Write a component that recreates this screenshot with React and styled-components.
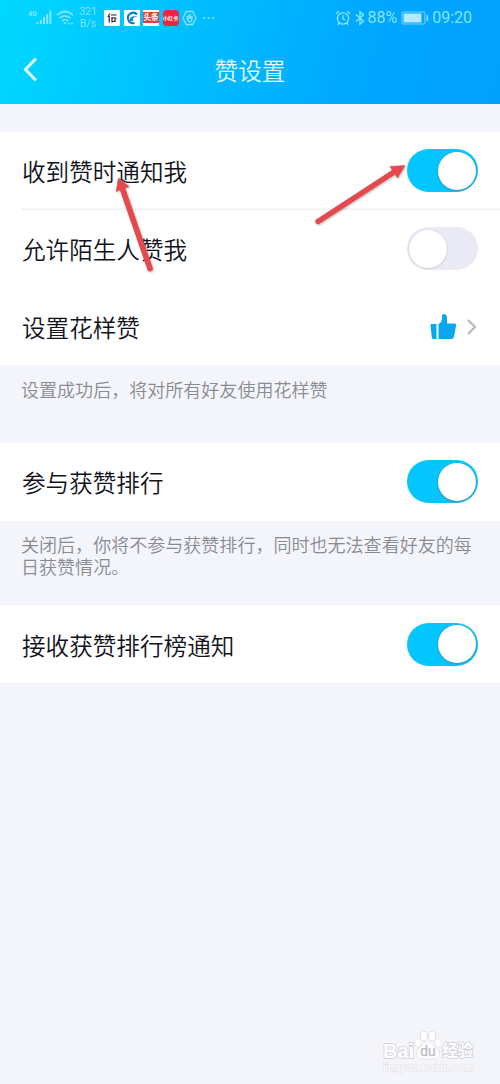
import React from 'react';
import styled, { createGlobalStyle } from 'styled-components';

const GlobalStyle = createGlobalStyle`
  body {
    margin: 0;
    background-color: #f4f5fa;
    font-family: Roboto, 'Noto Sans CJK SC', sans-serif;
  }
`;

const Page = styled.div`
  position: relative;
  min-height: 1084px;
  overflow: hidden;
`;

const Header = styled.header`
  height: 104px;
  background: linear-gradient(105deg, #00d8ff 0%, #00c2ff 32%, #00a8ff 70%, #00a0ff 100%);
`;

const StatusBar = styled.div`
  display: flex;
  align-items: center;
  justify-content: space-between;
  height: 36px;
  padding: 0 28px;
  color: #84e4ff;
`;

const StatusGroup = styled.div`
  display: flex;
  align-items: center;
`;

const Speed = styled.div`
  width: 20px;
  margin: 0 6px 0 4px;
  font-size: 10.5px;
  line-height: 12px;
  text-align: center;
`;

const AppBadge = styled.span`
  display: flex;
  align-items: center;
  justify-content: center;
  width: 16px;
  height: 16px;
  margin-right: 3.5px;
  border-radius: ${(props) => props.$radius || '1px'};
  background: ${(props) => props.$bg || '#fff'};
  color: #fff;
  font-size: ${(props) => props.$size || '7px'};
  font-weight: 700;
  line-height: 1;
  white-space: nowrap;
`;

const StatusText = styled.span`
  font-size: 16px;
  line-height: 20px;
`;

const NavBar = styled.div`
  display: grid;
  grid-template-columns: 60px 1fr 60px;
  align-items: center;
  height: 68px;
`;

const BackButton = styled.button`
  display: flex;
  padding: 0 0 0 22px;
  border: none;
  background: none;
`;

const Title = styled.h1`
  margin: 0;
  padding-top: 3px;
  color: #e2faff;
  font-size: 23.6px;
  font-weight: 350;
  line-height: 36px;
  text-align: center;
`;

const Group = styled.section`
  margin-top: ${(props) => props.$gap || '0'};
  background-color: #fff;
`;

const Row = styled.div`
  display: flex;
  align-items: center;
  justify-content: space-between;
  box-sizing: border-box;
  height: 77.75px;
  padding-right: 22px;
  margin-left: 22px;
  box-shadow: ${(props) => (props.$divider ? 'inset 0 -1.5px 0 #eff0f3' : 'none')};
`;

const Label = styled.span`
  color: #11121c;
  font-size: 23.6px;
  font-weight: 350;
  line-height: 36px;
  padding-top: 5px;
`;

const Hint = styled.p`
  box-sizing: border-box;
  height: ${(props) => props.$height};
  margin: 0;
  padding: 14.5px 20px 0 21px;
  color: #8a8b92;
  font-size: 18.04px;
  font-weight: 350;
  line-height: 22px;
`;

const Switch = styled.span`
  display: flex;
  align-items: center;
  justify-content: ${(props) => (props.$on ? 'flex-end' : 'flex-start')};
  box-sizing: border-box;
  width: 71px;
  height: 43px;
  padding: 0 2px;
  border-radius: 22px;
  background-color: ${(props) => (props.$on ? '#03c6ff' : '#e9eaf5')};
`;

const Knob = styled.span`
  width: 38px;
  height: 38px;
  border-radius: 50%;
  background-color: #fff;
  box-shadow: 0 0.5px 1px 1px ${(props) => (props.$on ? 'rgba(120, 110, 130, 0.4)' : 'rgba(120, 110, 130, 0.15)')};
`;

const RowEnd = styled.span`
  display: flex;
  align-items: center;
  gap: 9px;
  padding-top: 1px;
`;

const Arrows = styled.svg`
  position: absolute;
  top: 0;
  left: 0;
  filter: drop-shadow(1px 1px 1px rgba(60, 60, 60, 0.35));
`;

const Watermark = styled.div`
  position: absolute;
  right: 26px;
  bottom: 11px;
  width: 91px;
  color: #fff;
  font-family: 'Liberation Sans', 'Noto Sans CJK SC', sans-serif;
  -webkit-text-stroke: 1.6px #d0d1d6;
  paint-order: stroke fill;
`;

const WatermarkLogo = styled.div`
  display: flex;
  align-items: flex-end;
  height: 32px;
  font-size: 20px;
  font-weight: 700;
  line-height: 20px;
  white-space: nowrap;
`;

const WatermarkUrl = styled.div`
  font-size: 11px;
  line-height: 12px;
  letter-spacing: 0.1px;
  -webkit-text-stroke: 1px #dfe0e5;
`;

const Chinese = styled.span`
  font-size: 15.5px;
`;

function SignalIcon() {
  return (
    <svg width="24" height="20" viewBox="0 0 24 20" fill="currentColor">
      <text x="0" y="7.5" fontSize="7" fontWeight="700">4G</text>
      <rect x="8.5" y="14" width="2" height="2" />
      <rect x="11.8" y="12" width="2" height="4" />
      <rect x="15" y="9" width="2" height="7" />
      <rect x="18.2" y="6" width="2" height="10" />
      <rect x="21.4" y="2.5" width="2" height="13.5" />
    </svg>
  );
}

const Wifi = styled.svg`
  margin-left: 4px;
`;

function WifiIcon() {
  return (
    <Wifi width="18" height="16" viewBox="0 0 18 16" fill="none" stroke="currentColor" strokeWidth="1.7">
      <path d="M1 5.2Q9-2.2 17 5.2M3.5 8.2Q9 3.4 14.5 8.2M6 11Q9 8.4 12 11" />
      <path d="M7.2 12.2h3.6L9 14.6z" fill="currentColor" stroke="none" />
      <path d="M12 13.6h1.8M15 13.6h1.8" />
    </Wifi>
  );
}

const Dots = styled.svg`
  margin-left: 5px;
`;

function StatusIcons() {
  return (
    <StatusGroup>
      <SignalIcon />
      <WifiIcon />
      <Speed>321<br />B/s</Speed>
      <AppBadge>
        <svg width="12" height="12" viewBox="0 0 12 12" fill="none" stroke="#20263a" strokeWidth="1.2">
          <path d="M4 1.5L1.8 5M3.2 4v6.5M5 3h5.5M6 5v5.5M6 6h3v3.5H6" />
          <path d="M8.5 5.5l2 1.5" stroke="#4960c4" />
        </svg>
      </AppBadge>
      <AppBadge>
        <svg width="14" height="14" viewBox="0 0 14 14" fill="none">
          <path d="M12 3.5A5.2 5.2 0 1 0 9.5 12" stroke="#1474c4" strokeWidth="2" />
          <path d="M5.5 10.5C3.5 7 6 4.2 12.5 5.5C9 5.8 7 7 8.5 10z" fill="#1b88d8" />
        </svg>
      </AppBadge>
      <AppBadge $bg="linear-gradient(#fff 0 2px, #e43c43 2px 13px, #fff 13px)" $size="7.5px">头条</AppBadge>
      <AppBadge $bg="#ef2442" $radius="4px" $size="5px">小红书</AppBadge>
      <svg width="15" height="16" viewBox="0 0 15 16" fill="none" stroke="currentColor" strokeWidth="1.3">
        <path d="M4.2 1.5h6.6L14 8l-3.2 6.5H4.2L1 8z" />
        <path d="M5.2 9V6M6.8 8V4.5M8.4 8V4.5M10 9V6M5.2 8.5q1 3.3 3 3.3q1.8-.5 1.8-2.8M5.2 8h4.5" />
      </svg>
      <Dots width="14" height="4" viewBox="0 0 14 4" fill="currentColor">
        <circle cx="2" cy="2" r="1.1" />
        <circle cx="6.5" cy="2" r="1.1" />
        <circle cx="11" cy="2" r="1.1" />
      </Dots>
    </StatusGroup>
  );
}

const Bluetooth = styled.svg`
  margin: 0 2px 0 4px;
`;

const Battery = styled.svg`
  margin: 0 3px 0 4px;
`;

function SystemIcons() {
  return (
    <StatusGroup>
      <svg width="16" height="16" viewBox="0 0 16 16" fill="none" stroke="currentColor" strokeWidth="1.4">
        <circle cx="8" cy="8.5" r="5.6" />
        <path d="M8 5.3v3.5l2.3 1.2M1 3.8L4 1.3M15 3.8L12 1.3M4 13l-1.3 1.8M12 13l1.3 1.8" />
      </svg>
      <Bluetooth width="10" height="16" viewBox="0 0 10 16" fill="none" stroke="currentColor" strokeWidth="1.4">
        <path d="M1 4.5l7.5 6.7L5 14.3V1.7l3.5 3.1L1 11.5" />
      </Bluetooth>
      <StatusText>88%</StatusText>
      <Battery width="28" height="14" viewBox="0 0 28 14">
        <rect x="1" y="1" width="23" height="12" rx="1" fill="none" stroke="#7fd5fc" strokeWidth="1" />
        <rect x="2.5" y="2.5" width="18" height="9" fill="#b2eaff" />
        <rect x="25.5" y="4" width="1.7" height="6" fill="#84dcff" />
      </Battery>
      <StatusText>09:20</StatusText>
    </StatusGroup>
  );
}

function Toggle({ on }) {
  return (
    <Switch $on={on} role="switch" aria-checked={on}>
      <Knob $on={on} />
    </Switch>
  );
}

function SettingRow({ label, divider, children }) {
  return (
    <Row $divider={divider}>
      <Label>{label}</Label>
      {children}
    </Row>
  );
}

function PointerArrows() {
  return (
    <Arrows width="500" height="300" viewBox="0 0 500 300" fill="#e5484d" stroke="#e5484d">
      <path d="M150 268.5L122.5 189" strokeWidth="5.6" strokeLinecap="round" />
      <path d="M118.5 178L129 186.5L116 191.5z" strokeWidth="0.5" />
      <path d="M318 221.5L394 172" strokeWidth="5.4" strokeLinecap="round" />
      <path d="M405 165.5L390 166.5L397.5 178z" strokeWidth="0.5" />
    </Arrows>
  );
}

function App() {
  return (
    <Page lang="zh-CN">
      <GlobalStyle />
      <Header>
        <StatusBar>
          <StatusIcons />
          <SystemIcons />
        </StatusBar>
        <NavBar>
          <BackButton aria-label="返回">
            <svg width="18" height="26" viewBox="0 0 18 26" fill="none" stroke="#e2fbff" strokeWidth="3">
              <path d="M14 1.5L3.5 12.5L14 23.5" />
            </svg>
          </BackButton>
          <Title>赞设置</Title>
        </NavBar>
      </Header>

      <Group $gap="28px">
        <SettingRow label="收到赞时通知我" divider>
          <Toggle on />
        </SettingRow>
        <SettingRow label="允许陌生人赞我">
          <Toggle on={false} />
        </SettingRow>
        <SettingRow label="设置花样赞">
          <RowEnd>
            <svg width="28" height="28" viewBox="0 0 28 28" fill="#08a7ee">
              <path d="M2.5 11h5v15H4.2Q3 26 2.8 24.5L1.5 12.5Q1.4 11 2.5 11z" />
              <path d="M9.5 11Q13 9.5 13 5V2.8Q13 1 15 1Q18 1 18 5.5V10.5H25.5Q27.5 10.5 27 13L25 24Q24.6 26 22.5 26H9.5z" />
            </svg>
            <svg width="12" height="18" viewBox="0 0 12 18" fill="none" stroke="#b6b7c0" strokeWidth="2.2">
              <path d="M2 2L9 9L2 16" />
            </svg>
          </RowEnd>
        </SettingRow>
      </Group>
      <Hint $height="77.75px">设置成功后，将对所有好友使用花样赞</Hint>

      <Group>
        <SettingRow label="参与获赞排行">
          <Toggle on />
        </SettingRow>
      </Group>
      <Hint $height="84.5px">关闭后，你将不参与获赞排行，同时也无法查看好友的每日获赞情况。</Hint>

      <Group>
        <SettingRow label="接收获赞排行榜通知">
          <Toggle on />
        </SettingRow>
      </Group>

      <PointerArrows />

      <Watermark>
        <WatermarkLogo>
          <span>Bai</span>
          <svg width="28" height="31" viewBox="0 0 28 31" fill="#fff" stroke="#cfd0d5" strokeWidth="1">
            <ellipse cx="4" cy="13" rx="3" ry="4" />
            <ellipse cx="10" cy="6" rx="3.2" ry="4.5" />
            <ellipse cx="18" cy="6" rx="3.2" ry="4.5" />
            <ellipse cx="24" cy="13" rx="3" ry="4" />
            <path d="M14 12Q18 12 20 16Q26 20 25 25Q23 30 14 28.5Q5 30 3 25Q2 20 8 16Q10 12 14 12z" />
            <text x="14" y="26" fontSize="14" fontWeight="400" textAnchor="middle" fill="#b9bac0" strokeWidth="0.3">du</text>
          </svg>
          <Chinese>经验</Chinese>
        </WatermarkLogo>
        <WatermarkUrl>jingyan.baidu.com</WatermarkUrl>
      </Watermark>
    </Page>
  );
}

export default App;
